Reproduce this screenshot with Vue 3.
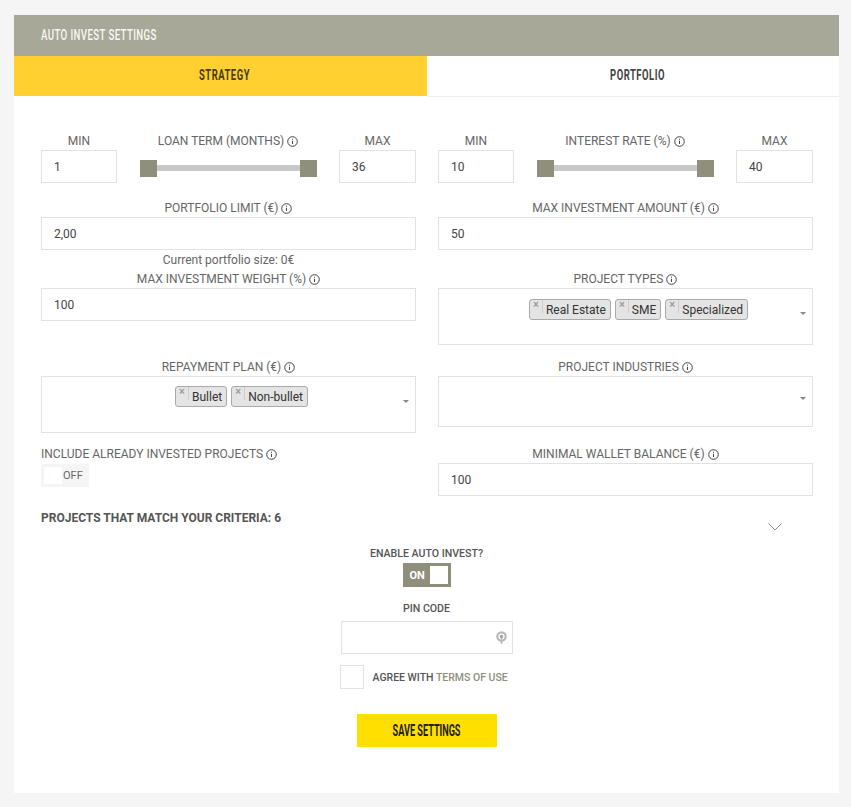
<script setup>
const rangeRows = [
  { label: 'LOAN TERM (MONTHS)', min: '1', max: '36' },
  { label: 'INTEREST RATE (%)', min: '10', max: '40' }
]
</script>

<template>
  <div class="page">
    <div class="card">
      <div class="title"><span class="narrow left-origin">AUTO INVEST SETTINGS</span></div>
      <div class="tabs">
        <div class="tab active"><span class="narrow">STRATEGY</span></div>
        <div class="tab second"><span class="narrow">PORTFOLIO</span></div>
      </div>
      <div class="content">
        <div class="row r1">
          <div v-for="r in rangeRows" :key="r.label" class="range">
            <div class="cell">
              <div class="label">MIN</div>
              <div class="input">{{ r.min }}</div>
            </div>
            <div class="cell">
              <div class="label">{{ r.label }} <svg class="info" viewBox="0 0 11 11"><circle cx="5.5" cy="5.5" r="4.8"/><path d="M5.5 4.8v3.2M5.5 2.7v1.1"/></svg></div>
              <div class="slider"><span class="handle"></span><span class="track"></span><span class="handle"></span></div>
            </div>
            <div class="cell">
              <div class="label">MAX</div>
              <div class="input">{{ r.max }}</div>
            </div>
          </div>
        </div>

        <div class="row r2">
          <div>
            <div class="label">PORTFOLIO LIMIT (€) <svg class="info" viewBox="0 0 11 11"><circle cx="5.5" cy="5.5" r="4.8"/><path d="M5.5 4.8v3.2M5.5 2.7v1.1"/></svg></div>
            <div class="input">2,00</div>
            <div class="hint">Current portfolio size: 0€</div>
          </div>
          <div>
            <div class="label">MAX INVESTMENT AMOUNT (€) <svg class="info" viewBox="0 0 11 11"><circle cx="5.5" cy="5.5" r="4.8"/><path d="M5.5 4.8v3.2M5.5 2.7v1.1"/></svg></div>
            <div class="input">50</div>
          </div>
        </div>

        <div class="row r3">
          <div>
            <div class="label">MAX INVESTMENT WEIGHT (%) <svg class="info" viewBox="0 0 11 11"><circle cx="5.5" cy="5.5" r="4.8"/><path d="M5.5 4.8v3.2M5.5 2.7v1.1"/></svg></div>
            <div class="input">100</div>
          </div>
          <div>
            <div class="label">PROJECT TYPES <svg class="info" viewBox="0 0 11 11"><circle cx="5.5" cy="5.5" r="4.8"/><path d="M5.5 4.8v3.2M5.5 2.7v1.1"/></svg></div>
            <div class="select tall">
              <span class="tag"><i>×</i>Real Estate</span>
              <span class="tag"><i>×</i>SME</span>
              <span class="tag"><i>×</i>Specialized</span>
              <span class="arrow"></span>
            </div>
          </div>
        </div>

        <div class="row r4">
          <div>
            <div class="label">REPAYMENT PLAN (€) <svg class="info" viewBox="0 0 11 11"><circle cx="5.5" cy="5.5" r="4.8"/><path d="M5.5 4.8v3.2M5.5 2.7v1.1"/></svg></div>
            <div class="select tall low">
              <span class="tag"><i>×</i>Bullet</span>
              <span class="tag"><i>×</i>Non-bullet</span>
              <span class="arrow"></span>
            </div>
          </div>
          <div>
            <div class="label">PROJECT INDUSTRIES <svg class="info" viewBox="0 0 11 11"><circle cx="5.5" cy="5.5" r="4.8"/><path d="M5.5 4.8v3.2M5.5 2.7v1.1"/></svg></div>
            <div class="select short"><span class="arrow"></span></div>
          </div>
        </div>

        <div class="row r5">
          <div>
            <div class="label left">INCLUDE ALREADY INVESTED PROJECTS <svg class="info" viewBox="0 0 11 11"><circle cx="5.5" cy="5.5" r="4.8"/><path d="M5.5 4.8v3.2M5.5 2.7v1.1"/></svg></div>
            <div class="off"><span class="off-knob"></span><span>OFF</span></div>
          </div>
          <div>
            <div class="label">MINIMAL WALLET BALANCE (€) <svg class="info" viewBox="0 0 11 11"><circle cx="5.5" cy="5.5" r="4.8"/><path d="M5.5 4.8v3.2M5.5 2.7v1.1"/></svg></div>
            <div class="input">100</div>
          </div>
        </div>

        <div class="criteria">
          <span>PROJECTS THAT MATCH YOUR CRITERIA: 6</span>
          <svg class="chev" viewBox="0 0 14 8"><path d="M.5.5 7 7 13.5.5"/></svg>
        </div>

        <div class="enable">
          <div class="small-label">ENABLE AUTO INVEST?</div>
          <div class="on"><span>ON</span><span class="on-knob"></span></div>
          <div class="small-label pin-label">PIN CODE</div>
          <div class="pin">
            <svg class="eye" viewBox="0 0 11 14"><circle cx="5.5" cy="5.5" r="4.2" fill="none" stroke="#b8b8b8" stroke-width="2.2"/><circle cx="5.5" cy="5.5" r="1.7" fill="#a0a0a0"/><path d="M4.7 7v6h1.6V7Z" fill="#b8b8b8"/></svg>
          </div>
          <div class="agree">
            <span class="check"></span>
            <span class="agree-text">AGREE WITH <span class="link">TERMS OF USE</span></span>
          </div>
          <div class="save"><span class="narrow save-text">SAVE SETTINGS</span></div>
        </div>
      </div>
    </div>
  </div>
</template>

<style>
html, body { margin: 0; background: #f5f5f5; }
</style>

<style scoped>
.page {
  box-sizing: border-box;
  width: 851px;
  height: 807px;
  padding: 15px 12px 14px 14px;
  background: #f5f5f5;
  font-family: Roboto, "Liberation Sans", sans-serif;
  color: #555;
}
.card { height: 778px; background: #fff; }
.narrow {
  display: inline-block;
  font-size: 15px;
  font-weight: 500;
  letter-spacing: .6px;
  white-space: nowrap;
  transform: scaleX(.645);
}
.left-origin { transform-origin: left center; }
.title {
  height: 41px;
  box-sizing: border-box;
  padding: 11px 0 0 27px;
  background: #a8a898;
  color: #f8f8f4;
  line-height: 18px;
}
.tabs { display: grid; grid-template-columns: 413px 412px; height: 41px; }
.tab {
  box-sizing: border-box;
  padding-left: 7px;
  text-align: center;
  line-height: 38px;
  color: #444;
  border-bottom: 1px solid #eee;
}
.tab.second { padding-left: 9px; }
.tab .narrow { font-weight: 700; letter-spacing: .8px; transform: scaleX(.63); }
.tab.active { background: #ffd030; border-bottom: 0; color: #453c10; height: 40px; }
.content { padding: 35px 26px 0 27px; }
.row { display: grid; grid-template-columns: 375px 375px; column-gap: 22px; }
.r1 { height: 67px; }
.r2 { height: 71px; }
.r3 { height: 88px; }
.r4 { height: 87px; }
.r5 { height: 62px; }
.range { display: grid; grid-template-columns: 76px 178px 77px; column-gap: 22px; }
.label {
  height: 18px;
  font-size: 12px;
  line-height: 18px;
  text-align: center;
  white-space: nowrap;
  color: #666;
}
.label.left { text-align: left; }
.info {
  width: 11px;
  height: 11px;
  vertical-align: -1.5px;
  margin-left: 0;
  fill: none;
  stroke: #444;
  stroke-width: 1;
}
.input {
  box-sizing: border-box;
  height: 33px;
  padding-left: 12px;
  border: 1px solid #e2e2e2;
  font-size: 12px;
  line-height: 33px;
  color: #444;
  background: #fff;
}
.hint { height: 20px; font-size: 12px; line-height: 20px; text-align: center; color: #666; }
.slider { display: flex; align-items: center; height: 36px; margin-left: 1px; }
.handle { width: 17px; height: 17px; background: #8f8f7b; flex: none; }
.track { flex: 1; height: 6px; background: #c8c8c8; }
.select {
  box-sizing: border-box;
  position: relative;
  display: flex;
  justify-content: center;
  align-items: flex-start;
  column-gap: 4px;
  padding: 10px 0 0 26px;
  border: 1px solid #e2e2e2;
}
.select.tall { height: 57px; }
.select.low { padding-top: 9px; }
.select.short { height: 51px; }
.tag {
  box-sizing: border-box;
  display: flex;
  height: 21px;
  padding-right: 4px;
  border: 1px solid #aaa;
  border-radius: 3px;
  background: #e4e4e4;
  font-size: 12px;
  line-height: 20px;
  color: #333;
  white-space: nowrap;
}
.tag i {
  width: 12px;
  height: 13px;
  margin-right: 3px;
  border-right: 1px solid #ccc;
  font: bold 10px/10px "Liberation Sans", sans-serif;
  text-align: center;
  color: #999;
}
.arrow {
  position: absolute;
  right: 6px;
  top: 23px;
  width: 0;
  height: 0;
  border: solid transparent;
  border-width: 3px 3px 0;
  border-top-color: #888;
}
.select.short .arrow { top: 20px; }
.off {
  display: flex;
  align-items: center;
  box-sizing: border-box;
  width: 48px;
  height: 23px;
  margin-top: 1px;
  background: #f5f5f5;
  font-size: 11px;
  color: #666;
}
.off-knob { width: 18px; height: 17px; margin: 0 1px 0 3px; background: #fff; flex: none; }
.criteria {
  position: relative;
  height: 39px;
  font-size: 12px;
  font-weight: 700;
  line-height: 22px;
  color: #555;
}
.chev {
  position: absolute;
  left: 727px;
  top: 16px;
  width: 14px;
  height: 8px;
  fill: none;
  stroke: #888;
  stroke-width: 1;
}
.enable { display: flex; flex-direction: column; align-items: center; padding-right: 1px; }
.small-label { font-size: 10.6px; font-weight: 500; line-height: 16px; color: #555; }
.on {
  display: flex;
  align-items: center;
  justify-content: space-between;
  box-sizing: border-box;
  width: 48px;
  height: 24px;
  margin-top: 1px;
  padding: 3px 3px 3px 7px;
  background: #8f8f7b;
  color: #fff;
  font-size: 11px;
  font-weight: 700;
}
.on-knob { width: 18px; height: 18px; background: #fff; }
.pin-label { margin-top: 14px; }
.pin {
  box-sizing: border-box;
  display: flex;
  align-items: center;
  justify-content: flex-end;
  width: 172px;
  height: 33px;
  margin-top: 4px;
  padding-right: 5px;
  border: 1px solid #e2e2e2;
}
.eye { width: 11px; height: 14px; margin-top: 1px; }
.agree { display: flex; align-items: center; width: 174px; height: 24px; margin-top: 11px; }
.check { box-sizing: border-box; width: 24px; height: 24px; border: 1px solid #e2e2e2; flex: none; }
.agree-text { margin-left: 9px; font-size: 10.5px; font-weight: 500; white-space: nowrap; color: #555; }
.link { color: #8f8f7b; }
.save {
  width: 140px;
  height: 33px;
  margin-top: 25px;
  background: #ffdf00;
  color: #222;
  text-align: center;
  line-height: 33px;
}
.save-text { font-size: 16px; font-weight: 700; letter-spacing: 0; transform: scaleX(.57); }
</style>
